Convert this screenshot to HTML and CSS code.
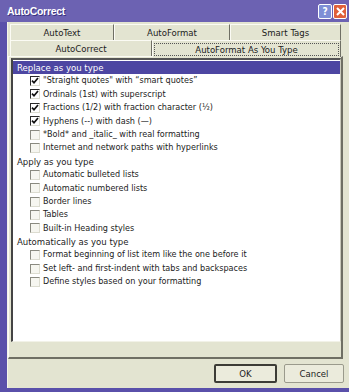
FILE: index.html
```html
<!DOCTYPE html>
<html lang="en">
<head>
  <meta charset="UTF-8">
  <title>AutoCorrect</title>
  <link rel="stylesheet" href="styles.css">
</head>
<body>
  <div class="window">
    <div class="titlebar">
      <span class="title">AutoCorrect</span>
      <span class="tbtn help">?</span>
      <span class="tbtn close">
        <svg width="9" height="9" viewBox="0 0 9 9"><path d="M1 1L8 8M8 1L1 8" stroke="#fff" stroke-width="2"/></svg>
      </span>
    </div>

    <div class="client">
      <div class="tabs">
        <div class="tabrow">
          <div class="tab t1">AutoText</div>
          <div class="tab t2">AutoFormat</div>
          <div class="tab t3">Smart Tags</div>
        </div>
        <div class="tabrow">
          <div class="tab t4">AutoCorrect</div>
          <div class="tab active"><span class="focus">AutoFormat As You Type</span></div>
        </div>
      </div>

      <div class="panel">
        <div class="list">
          <div class="group sel">Replace as you type</div>
          <div class="item"><span class="box on"></span>"Straight quotes" with “smart quotes”</div>
          <div class="item"><span class="box on"></span>Ordinals (1st) with superscript</div>
          <div class="item"><span class="box on"></span>Fractions (1/2) with fraction character (½)</div>
          <div class="item"><span class="box on"></span>Hyphens (--) with dash (—)</div>
          <div class="item"><span class="box"></span>*Bold* and _italic_ with real formatting</div>
          <div class="item"><span class="box"></span>Internet and network paths with hyperlinks</div>
          <div class="group">Apply as you type</div>
          <div class="item"><span class="box"></span>Automatic bulleted lists</div>
          <div class="item"><span class="box"></span>Automatic numbered lists</div>
          <div class="item"><span class="box"></span>Border lines</div>
          <div class="item"><span class="box"></span>Tables</div>
          <div class="item"><span class="box"></span>Built-in Heading styles</div>
          <div class="group">Automatically as you type</div>
          <div class="item"><span class="box"></span>Format beginning of list item like the one before it</div>
          <div class="item"><span class="box"></span>Set left- and first-indent with tabs and backspaces</div>
          <div class="item"><span class="box"></span>Define styles based on your formatting</div>
        </div>
      </div>

      <div class="buttons">
        <button class="btn default">OK</button>
        <button class="btn">Cancel</button>
      </div>
    </div>
  </div>
</body>
</html>
```

FILE: styles.css
```css
body {
  margin: 0;
  font-family: "DejaVu Sans Condensed", "Liberation Sans", Arial, sans-serif;
  font-size: 9.5px;
  color: #1c1c1c;
  background-color: #e3e4d1;
}
.window {
  width: 349px;
  height: 392px;
  box-sizing: border-box;
  background-color: #5a50aa;
  padding: 0 0 4px 7px;
  display: flex;
  flex-direction: column;
}
.titlebar {
  height: 22px;
  margin-left: -7px;
  padding-left: 7px;
  display: flex;
  align-items: center;
  background-color: #6c62b2;
  color: #fff;
}
.title {
  font-family: "Liberation Sans", Arial, sans-serif;
  font-weight: bold;
  font-size: 10.5px;
  letter-spacing: -0.3px;
  text-shadow: 1px 1px 0 #3a3280;
  flex: 1;
}
.tbtn {
  width: 12px;
  height: 13px;
  border: 1px solid #fff;
  border-radius: 2px;
  margin-right: 1px;
  display: flex;
  align-items: center;
  justify-content: center;
  font-weight: bold;
  font-size: 10px;
}
.help {
  background-color: #7f8fd6;
}
.close {
  background-color: #e0603a;
  margin-right: 2px;
}
.client {
  flex: 1;
  background-color: #e3e4d1;
  border-left: 1px solid #f4f4ea;
  padding: 2px 0 0 0;
  display: flex;
  flex-direction: column;
}
.tabs {
  margin-left: 2px;
  width: 331px;
}
.tabrow {
  display: flex;
  height: 16px;
}
.tab {
  box-sizing: border-box;
  border-top: 1px solid #fbfbf4;
  border-left: 1px solid #fbfbf4;
  border-right: 1px solid #6f6f64;
  display: flex;
  align-items: center;
  justify-content: center;
}
.t1 { width: 104px; }
.t2 { width: 116px; }
.t3 { width: 111px; }
.t4 { width: 142px; }
.active {
  width: 189px;
  height: 17px;
  padding: 2px 1px 1px 1px;
  position: relative;
  z-index: 1;
  background-color: #e3e4d1;
}
.focus {
  flex: 1;
  align-self: stretch;
  border: 1px dotted #555;
  display: flex;
  align-items: center;
  justify-content: center;
}
.panel {
  width: 335px;
  height: 303px;
  box-sizing: border-box;
  border: 1px solid #fbfbf4;
  border-right: 2px solid #6f6f64;
  border-bottom: 2px solid #6f6f64;
  padding: 1px 0 0 2px;
}
.list {
  width: 330px;
  height: 284px;
  box-sizing: border-box;
  background-color: #fff;
  border-top: 2px solid #555;
  border-left: 2px solid #444;
  border-right: 1px solid #c9c9bb;
  border-bottom: 1px solid #f2f2e8;
  padding-top: 1px;
}
.group {
  height: 13.4px;
  line-height: 13.4px;
  padding-left: 4px;
}
.sel {
  background-color: #4d46a2;
  color: #fff;
}
.item {
  height: 13.4px;
  line-height: 13.4px;
  padding-left: 17px;
  font-size: 9px;
  display: flex;
  align-items: center;
  white-space: nowrap;
}
.box {
  width: 8px;
  height: 8px;
  margin-right: 3px;
  border-top: 1px solid #8a8a80;
  border-left: 1px solid #8a8a80;
  border-right: 1px solid #dcdcd0;
  border-bottom: 1px solid #dcdcd0;
  background-color: #f6f6f0;
  flex: none;
}
.box.on {
  border-top-color: #2a2a2a;
  border-left-color: #2a2a2a;
  background: #fff url("data:image/svg+xml;utf8,<svg xmlns='http://www.w3.org/2000/svg' width='8' height='8'><path d='M1 3.6l2 2.2L7 1' fill='none' stroke='%23111' stroke-width='1.7'/></svg>") no-repeat center;
}
.buttons {
  display: flex;
  justify-content: flex-end;
  gap: 7px;
  padding: 5px 5px 0 0;
}
.btn {
  font-family: "DejaVu Sans Condensed", "Liberation Sans", Arial, sans-serif;
  font-size: 9.5px;
  color: #1c1c1c;
  width: 60px;
  height: 19px;
  padding: 0;
  background-color: #ebebdc;
  border: 1px solid #9a9a8c;
  border-radius: 2px;
}
.default {
  width: 63px;
  border: 2px solid #3c3c36;
}
```
